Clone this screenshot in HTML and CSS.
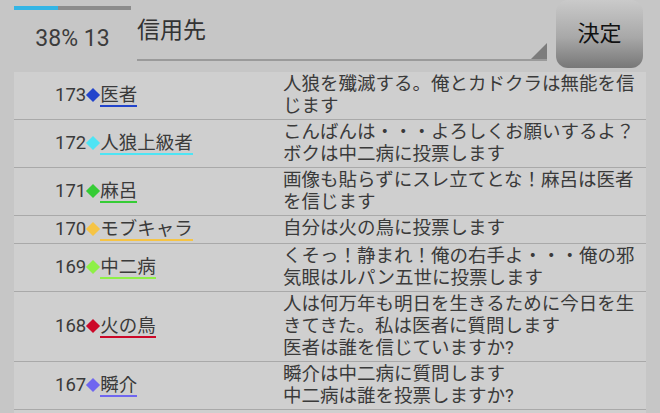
FILE: index.html
```html
<!DOCTYPE html>
<html lang="ja">
<head>
  <meta charset="UTF-8">
  <meta name="viewport" content="width=device-width, initial-scale=1.0">
  <title>投票</title>
  <link rel="stylesheet" href="styles.css">
</head>
<body>
  <!-- ヘッダー -->
  <div class="header">
    <div class="status">
      <div class="progress"><div class="progress-fill" style="width: 38%;"></div></div>
      <div class="status-text">38% 13</div>
    </div>
    <div class="spinner">
      <span class="spinner-text">信用先</span>
      <span class="spinner-arrow"></span>
    </div>
    <button class="decide">決定</button>
  </div>

  <!-- ログ一覧 -->
  <div class="log-list">
    <div class="log-row">
      <div class="log-who"><span class="num">173</span><span class="mark" style="background: #2244cc;"></span><span class="name" style="border-color: #2244cc;">医者</span></div>
      <div class="log-msg">人狼を殲滅する。俺とカドクラは無能を信じます</div>
    </div>
    <div class="log-row">
      <div class="log-who"><span class="num">172</span><span class="mark" style="background: #4ee4f4;"></span><span class="name" style="border-color: #4ee4f4;">人狼上級者</span></div>
      <div class="log-msg">こんばんは・・・よろしくお願いするよ？ボクは中二病に投票します</div>
    </div>
    <div class="log-row">
      <div class="log-who"><span class="num">171</span><span class="mark" style="background: #36cc36;"></span><span class="name" style="border-color: #36cc36;">麻呂</span></div>
      <div class="log-msg">画像も貼らずにスレ立てとな！麻呂は医者を信じます</div>
    </div>
    <div class="log-row">
      <div class="log-who"><span class="num">170</span><span class="mark" style="background: #f6c445;"></span><span class="name" style="border-color: #f6c445;">モブキャラ</span></div>
      <div class="log-msg">自分は火の鳥に投票します</div>
    </div>
    <div class="log-row">
      <div class="log-who"><span class="num">169</span><span class="mark" style="background: #8ef046;"></span><span class="name" style="border-color: #8ef046;">中二病</span></div>
      <div class="log-msg">くそっ！静まれ！俺の右手よ・・・俺の邪気眼はルパン五世に投票します</div>
    </div>
    <div class="log-row">
      <div class="log-who"><span class="num">168</span><span class="mark" style="background: #cc0828;"></span><span class="name" style="border-color: #cc0828;">火の鳥</span></div>
      <div class="log-msg">人は何万年も明日を生きるために今日を生きてきた。私は医者に質問します<br>医者は誰を信じていますか?</div>
    </div>
    <div class="log-row">
      <div class="log-who"><span class="num">167</span><span class="mark" style="background: #6f66f0;"></span><span class="name" style="border-color: #6f66f0;">瞬介</span></div>
      <div class="log-msg">瞬介は中二病に質問します<br>中二病は誰を投票しますか?</div>
    </div>
  </div>
</body>
</html>
```

FILE: styles.css
```css
body {
  margin: 0;
  background: #c6c6c6;
  font-family: Roboto, "Noto Sans CJK JP", sans-serif;
  color: #3a3a3a;
  overflow: hidden;
}
.header {
  display: flex;
  align-items: flex-start;
  height: 72px;
  padding-left: 14px;
}
.status {
  width: 117px;
  padding-top: 6px;
}
.progress {
  height: 4px;
  background: #8c8c8c;
}
.progress-fill {
  height: 100%;
  background: #33b5e5;
}
.status-text {
  margin-top: 14px;
  font-size: 23px;
  line-height: 30px;
  text-align: center;
  color: #3c3c3c;
}
.spinner {
  position: relative;
  width: 410px;
  height: 59px;
  margin-left: 6px;
  border-bottom: 2px solid #9a9a9a;
}
.spinner-text {
  display: block;
  padding-top: 16px;
  font-size: 23px;
  line-height: 30px;
  color: #333;
}
.spinner-arrow {
  position: absolute;
  right: 0;
  bottom: 0;
  width: 0;
  height: 0;
  border-left: 16px solid transparent;
  border-bottom: 16px solid #7c7c7c;
}
.decide {
  width: 87px;
  height: 68px;
  margin-left: 9px;
  border: none;
  border-radius: 12px;
  background: linear-gradient(#cacaca, #a8a8a8 55%, #777);
  font-family: "Noto Sans CJK JP", sans-serif;
  font-size: 22px;
  color: #111;
  padding: 0 0 6px;
}
.log-list {
  margin: 0 14px;
  background: #cfcfcf;
  padding-bottom: 20px;
}
.log-row {
  display: flex;
  padding: 1px 0 2px;
  border-bottom: 1px solid #a9a9a9;
}
.log-who {
  width: 228px;
  padding-left: 41px;
  display: flex;
  align-items: center;
  font-size: 18.5px;
}
.num {
  line-height: 22px;
}
.mark {
  width: 10px;
  height: 10px;
  margin: 0 2px 0 2px;
  transform: rotate(45deg);
}
.name {
  line-height: 20px;
  margin-top: 2px;
  border-bottom: 2px solid;
}
.log-msg {
  flex: 1;
  padding-right: 5px;
  font-size: 18.5px;
  line-height: 22px;
}
```
